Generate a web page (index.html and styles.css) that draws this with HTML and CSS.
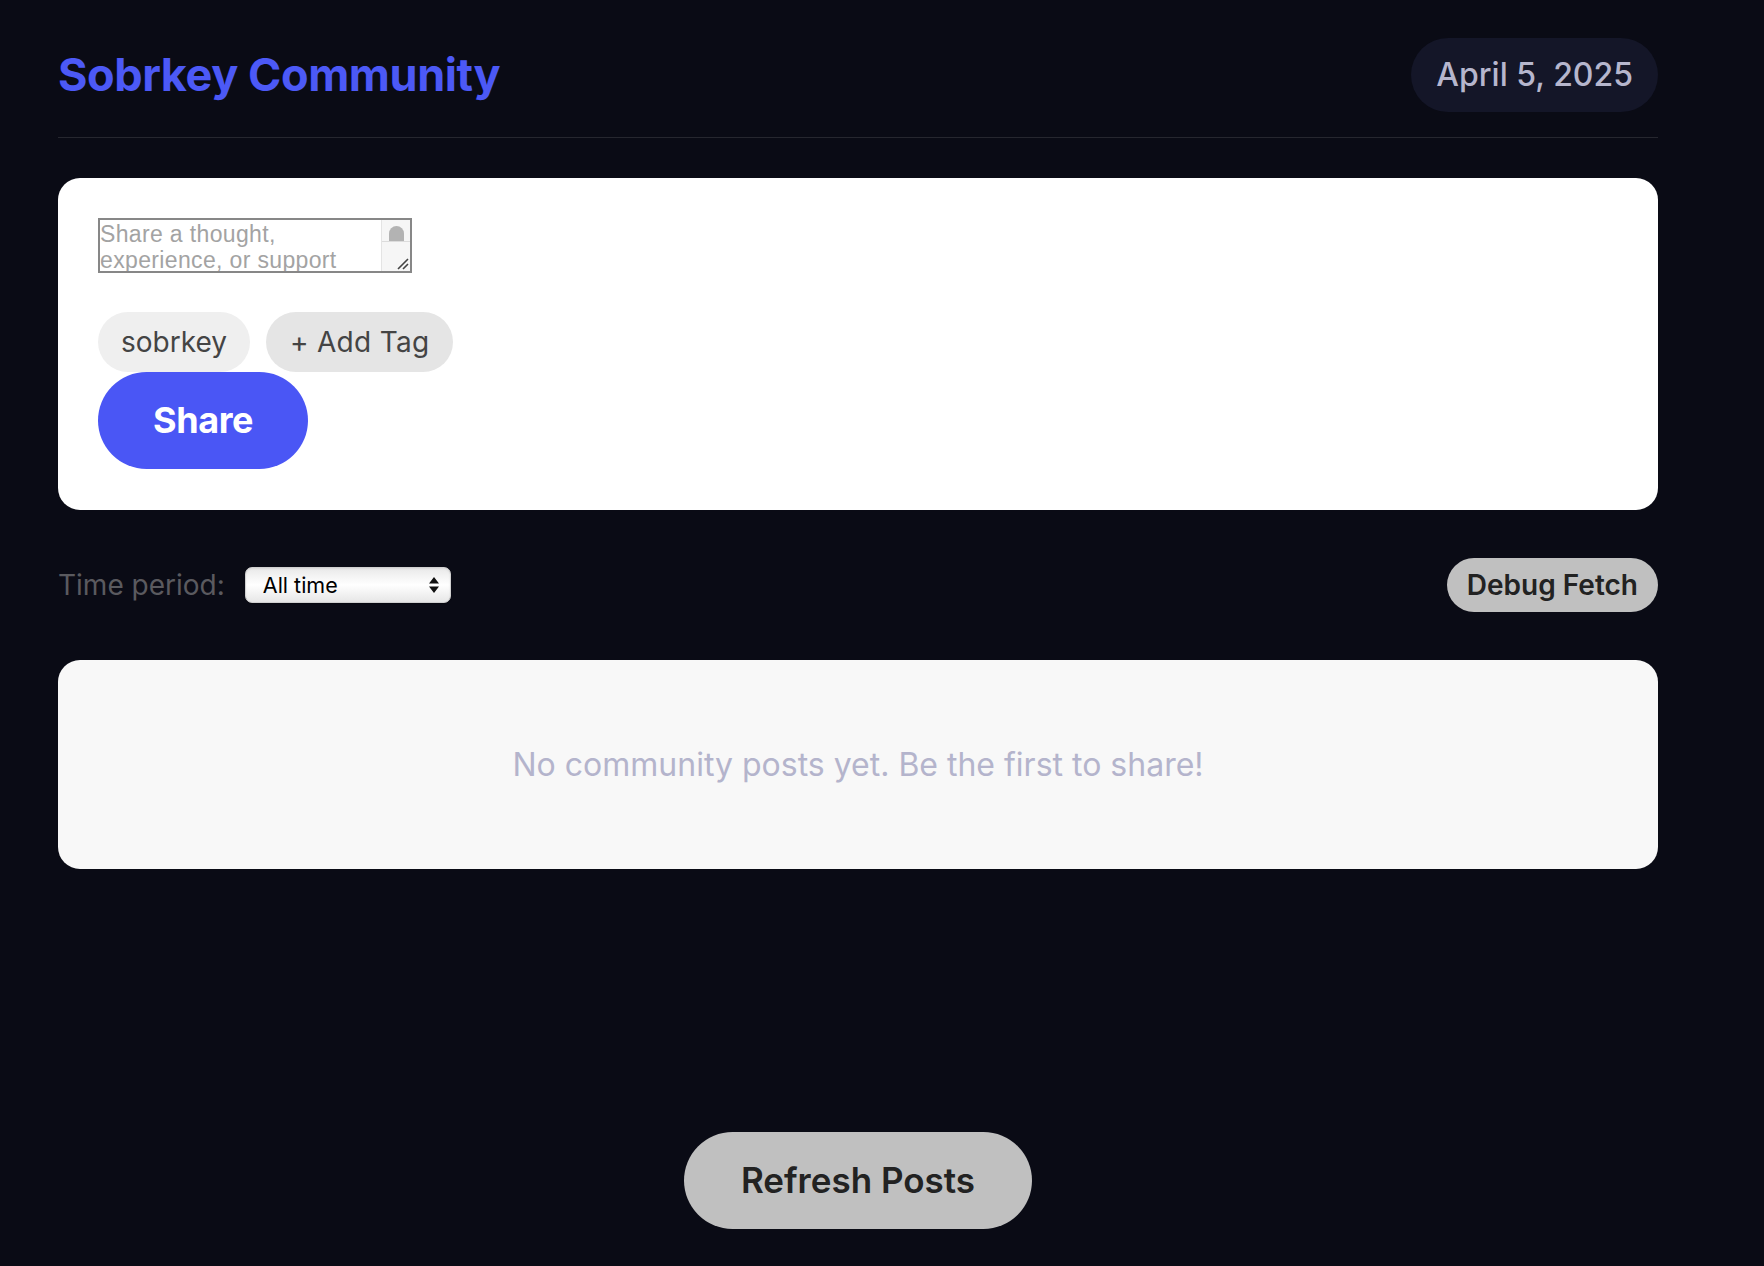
FILE: index.html
```html
<!DOCTYPE html>
<html lang="en">
<head>
<meta charset="utf-8">
<title>Sobrkey Community</title>
<link rel="stylesheet" href="styles.css">
</head>
<body>
<div class="page">
  <header class="header">
    <h1 class="title">Sobrkey Community</h1>
    <div class="date-pill">April 5, 2025</div>
  </header>

  <section class="composer">
    <div class="input-box">
      <textarea class="input" placeholder="Share a thought, experience, or support"></textarea>
      <div class="fake-scroll">
        <div class="scroll-track"><div class="scroll-thumb"></div></div>
        <div class="scroll-resizer">
          <svg width="16" height="16" viewBox="0 0 16 16"><path d="M15 5 L5 15 M15 10 L10 15" stroke="#444" stroke-width="1.6" fill="none"/></svg>
        </div>
      </div>
    </div>
    <div class="tags">
      <span class="tag">sobrkey</span>
      <button class="tag tag-add">+ Add Tag</button>
    </div>
    <button class="share-btn">Share</button>
  </section>

  <div class="controls">
    <div class="period">
      <label class="period-label" for="period">Time period:</label>
      <div class="select-wrap">
        <select id="period" class="select">
          <option>All time</option>
        </select>
        <svg class="select-arrows" width="12" height="18" viewBox="0 0 12 18"><path d="M6 1 L11 7.5 H1 Z M6 17 L11 10.5 H1 Z" fill="#111"/></svg>
      </div>
    </div>
    <button class="debug-btn">Debug Fetch</button>
  </div>

  <section class="posts">
    <p class="empty">No community posts yet. Be the first to share!</p>
  </section>

  <div class="refresh-row">
    <button class="refresh-btn">Refresh Posts</button>
  </div>
</div>
</body>
</html>
```

FILE: styles.css
```css
* { box-sizing: border-box; }

html, body {
  margin: 0;
  padding: 0;
  background: #0a0b15;
}

body {
  font-family: Inter, "Noto Sans", sans-serif;
  color: #ddd;
}

.page {
  width: 1600px;
  margin-left: 58px;
  padding-top: 38px;
}

.header {
  display: flex;
  justify-content: space-between;
  align-items: center;
  padding-bottom: 25px;
  border-bottom: 1px solid #26272f;
}

.title {
  margin: 0;
  font-size: 45px;
  font-weight: 700;
  color: #4c59f6;
  line-height: 56px;
  letter-spacing: -0.4px;
}

.date-pill {
  background: #141628;
  color: #b6b6cd;
  font-size: 32px;
  font-weight: 500;
  line-height: 40px;
  padding: 17px 25px;
  border-radius: 37px;
}

.composer {
  margin-top: 40px;
  background: #ffffff;
  border-radius: 22px;
  padding: 40px 40px 41px;
  display: flex;
  flex-direction: column;
  align-items: flex-start;
}

.input-box {
  display: flex;
  width: 314px;
  height: 55px;
  border: 2px solid #878787;
  background: #fff;
}

.input {
  flex: 1;
  border: none;
  outline: none;
  resize: none;
  overflow: hidden;
  padding: 1px 0 0 0;
  margin: 0;
  font-family: "Liberation Sans", Arial, sans-serif;
  font-size: 23px;
  line-height: 26px;
  letter-spacing: 0.35px;
  color: #333;
  background: transparent;
}

.input::placeholder {
  color: #a3a3a3;
}

.fake-scroll {
  width: 29px;
  border-left: 1px solid #e4e4e4;
  background: #f6f6f6;
  display: flex;
  flex-direction: column;
}

.scroll-track {
  height: 22px;
  display: flex;
  justify-content: center;
  align-items: flex-end;
  border-bottom: 1px solid #dcdcdc;
}

.scroll-thumb {
  width: 15px;
  height: 15px;
  background: #b3b3b3;
  border-radius: 8px 8px 0 0;
}

.scroll-resizer {
  flex: 1;
  display: flex;
  justify-content: flex-end;
  align-items: flex-end;
  padding: 0 1px 1px 0;
}

.scroll-resizer svg { display: block; }

.tags {
  margin-top: 39px;
  display: flex;
  gap: 16px;
}

.tag {
  display: inline-block;
  font-family: Inter, "Noto Sans", sans-serif;
  font-size: 28px;
  font-weight: 400;
  color: #444;
  line-height: 34px;
  padding: 13px 23px;
  border: none;
  border-radius: 30px;
  background: #efefef;
}

.tag-add {
  background: #e5e5e5;
  padding: 13px 24px;
  letter-spacing: 0.3px;
}

.share-btn {
  font-family: Inter, "Noto Sans", sans-serif;
  font-size: 36px;
  font-weight: 700;
  color: #fff;
  background: #4a56f5;
  border: none;
  border-radius: 49px;
  line-height: 45px;
  padding: 26px 55px;
  letter-spacing: -0.4px;
}

.controls {
  margin-top: 48px;
  display: flex;
  justify-content: space-between;
  align-items: center;
}

.period {
  display: flex;
  align-items: center;
  gap: 20px;
}

.period-label {
  font-size: 28px;
  color: #5a5a5f;
  line-height: 34px;
}

.select-wrap {
  position: relative;
  width: 206px;
  height: 36px;
}

.select {
  -webkit-appearance: none;
  appearance: none;
  width: 100%;
  height: 100%;
  border: 1px solid #d0d0d0;
  border-radius: 7px;
  background: linear-gradient(#e9e9e9, #ffffff 50%, #e6e6e6);
  box-shadow: inset 0 1px 2px rgba(0,0,0,0.08), 0 1px 1px rgba(0,0,0,0.25);
  font-family: Inter, "Noto Sans", sans-serif;
  font-size: 21.5px;
  color: #000;
  padding: 0 30px 0 17px;
  outline: none;
}

.select-arrows {
  position: absolute;
  right: 11px;
  top: 9px;
  pointer-events: none;
}

.debug-btn {
  font-family: Inter, "Noto Sans", sans-serif;
  font-size: 28px;
  font-weight: 600;
  color: #222;
  background: #c0c0c0;
  border: none;
  border-radius: 27px;
  line-height: 34px;
  padding: 10px 20px;
}

.posts {
  margin-top: 48px;
  background: #f8f8f8;
  border-radius: 22px;
  padding: 80px 40px;
  text-align: center;
}

.empty {
  margin: 0;
  font-size: 32px;
  line-height: 49px;
  color: #b4b4cc;
}

.refresh-row {
  margin-top: 263px;
  display: flex;
  justify-content: center;
}

.refresh-btn {
  font-family: Inter, "Noto Sans", sans-serif;
  font-size: 35px;
  font-weight: 600;
  color: #222;
  background: #c0c0c0;
  border: none;
  border-radius: 49px;
  line-height: 45px;
  padding: 26px 57px;
}
```
